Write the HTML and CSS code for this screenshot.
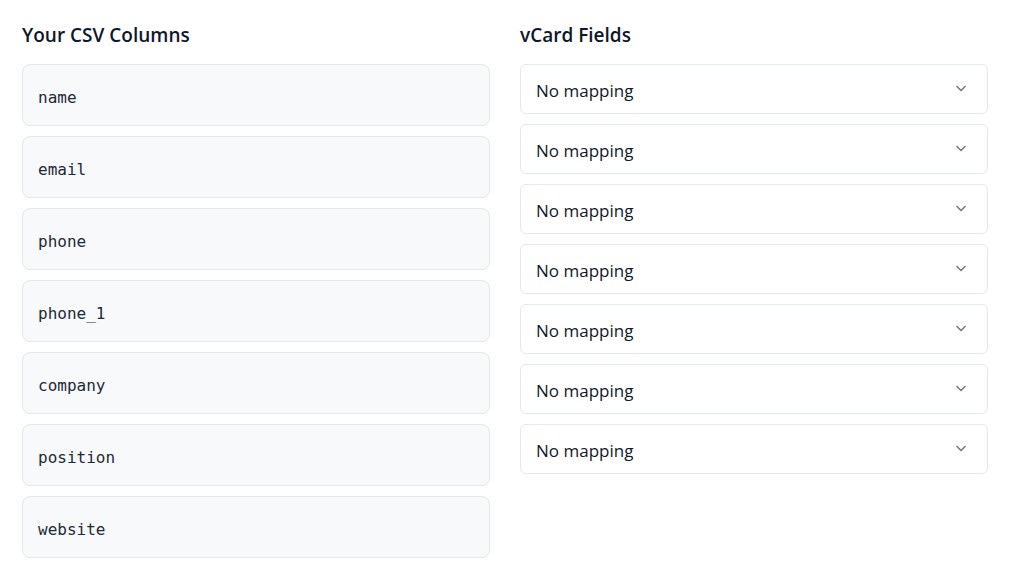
FILE: index.html
```html
<!DOCTYPE html>
<html>
<head>
<meta charset="utf-8">
<link rel="stylesheet" href="styles.css">
</head>
<body>
<div class="page">
  <section class="col">
    <h2 class="title">Your CSV Columns</h2>
    <div class="list">
      <div class="csv">name</div>
      <div class="csv">email</div>
      <div class="csv">phone</div>
      <div class="csv">phone_1</div>
      <div class="csv">company</div>
      <div class="csv">position</div>
      <div class="csv">website</div>
    </div>
  </section>
  <section class="col">
    <h2 class="title">vCard Fields</h2>
    <div class="list">
      <div class="select"><span>No mapping</span><svg class="chev" viewBox="0 0 16 16"><path d="M3.5 6l4.5 4.5L12.5 6"/></svg></div>
      <div class="select"><span>No mapping</span><svg class="chev" viewBox="0 0 16 16"><path d="M3.5 6l4.5 4.5L12.5 6"/></svg></div>
      <div class="select"><span>No mapping</span><svg class="chev" viewBox="0 0 16 16"><path d="M3.5 6l4.5 4.5L12.5 6"/></svg></div>
      <div class="select"><span>No mapping</span><svg class="chev" viewBox="0 0 16 16"><path d="M3.5 6l4.5 4.5L12.5 6"/></svg></div>
      <div class="select"><span>No mapping</span><svg class="chev" viewBox="0 0 16 16"><path d="M3.5 6l4.5 4.5L12.5 6"/></svg></div>
      <div class="select"><span>No mapping</span><svg class="chev" viewBox="0 0 16 16"><path d="M3.5 6l4.5 4.5L12.5 6"/></svg></div>
      <div class="select"><span>No mapping</span><svg class="chev" viewBox="0 0 16 16"><path d="M3.5 6l4.5 4.5L12.5 6"/></svg></div>
    </div>
  </section>
</div>
</body>
</html>
```

FILE: styles.css
```css
html, body {
  margin: 0;
  padding: 0;
  background: #ffffff;
}
body {
  font-family: "Open Sans", "Noto Sans", sans-serif;
  color: #111827;
}
.page {
  display: grid;
  grid-template-columns: 468px 468px;
  column-gap: 30px;
  padding: 23px 0 0 22px;
}
.title {
  margin: 0 0 17px 0;
  font-size: 19px;
  line-height: 24px;
  font-weight: 600;
  color: #0f172a;
}
.list {
  display: flex;
  flex-direction: column;
  gap: 10px;
}
.csv {
  box-sizing: border-box;
  height: 62px;
  display: flex;
  align-items: center;
  padding: 5px 16px 0 15px;
  background: #f8f9fa;
  border: 1px solid #e5e7eb;
  border-radius: 8px;
  font-family: "DejaVu Sans Mono", monospace;
  font-size: 16px;
  color: #1f2937;
}
.select {
  box-sizing: border-box;
  height: 50px;
  display: flex;
  align-items: center;
  justify-content: space-between;
  padding: 2px 18px 0 15px;
  background: #ffffff;
  border: 1px solid #e2e8f0;
  border-radius: 6px;
  font-size: 17px;
  color: #111827;
}
.chev {
  width: 16px;
  height: 16px;
  margin-top: -5px;
  fill: none;
  stroke: #6b7280;
  stroke-width: 1.4;
}
```
